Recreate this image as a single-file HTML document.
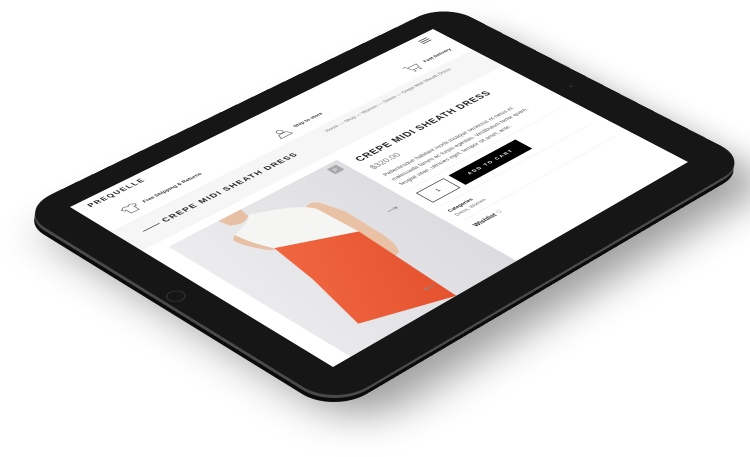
<!DOCTYPE html>
<html><head><meta charset="utf-8"><style>
html,body{margin:0;padding:0;background:#fff;width:750px;height:450px;overflow:hidden;font-family:"Liberation Sans",sans-serif}
.m{position:absolute;left:0;top:0;transform-origin:0 0;transform:matrix3d(0.402202,-0.170633,0,0.00011019,0.317078,0.180374,0,-0.00007618,0,0,1,0,70,207,0,1)}
.wrap{position:absolute;left:0;top:0;width:750px;height:450px}
.body{position:absolute;left:-82px;top:-62px;width:1205px;height:922px;border-radius:85px}
.scr{position:absolute;left:0;top:0;width:1024px;height:768px;background:#fff;overflow:hidden}
.a{position:absolute;white-space:nowrap}
.t{font-weight:bold;letter-spacing:3px;color:#222}
.line{position:absolute;height:1px;background:#e4e4e4}
</style></head><body>
<div class="wrap" style="transform:translate(-1px,7px)"><div class="m"><div class="body" style="background:#0b0b0b;box-shadow:0 70px 110px rgba(0,0,0,.38)"></div></div></div>
<div class="wrap" style="transform:translate(-0.5px,3px)"><div class="m"><div class="body" style="background:#4a4a4a"></div></div></div>
<div class="wrap"><div class="m">
<div class="body" style="background:#161616"></div>
<div style="position:absolute;left:-74px;top:365px;width:32px;height:32px;border-radius:50%;border:3px solid #2e2e2e"></div>
<div style="position:absolute;left:1065px;top:380px;width:8px;height:8px;border-radius:50%;background:#2a2a2a"></div>
<div class="scr">
 <div class="a t" style="left:28px;top:14px;font-size:19px">PREQUELLE</div>
 <svg class="a" style="left:960px;top:14px" width="30" height="20"><path d="M2 3h26M2 10h26M2 17h26" stroke="#333" stroke-width="2.5"/></svg>
 <svg class="a" style="left:62px;top:72px" width="40" height="34"><path d="M10 4l-8 6 4 6 4-2v16h20V14l4 2 4-6-8-6h-6c0 4-8 4-8 0z" fill="none" stroke="#666" stroke-width="2"/></svg>
 <div class="a" style="left:115px;top:80px;font-size:13px;font-weight:bold;color:#333">Free Shipping &amp; Returns</div>
 <svg class="a" style="left:470px;top:72px" width="40" height="34"><circle cx="20" cy="10" r="7" fill="none" stroke="#666" stroke-width="2"/><path d="M4 32l6-14h20l6 14z" fill="none" stroke="#666" stroke-width="2"/></svg>
 <div class="a" style="left:525px;top:80px;font-size:13px;font-weight:bold;color:#333">Ship to store</div>
 <svg class="a" style="left:855px;top:72px" width="40" height="34"><path d="M2 4h6l4 20h20l4-14H10" fill="none" stroke="#666" stroke-width="2"/><circle cx="14" cy="30" r="2.5" fill="#666"/><circle cx="30" cy="30" r="2.5" fill="#666"/></svg>
 <div class="a" style="left:910px;top:80px;font-size:13px;font-weight:bold;color:#333">Fast Delivery</div>
 <div style="position:absolute;left:0;top:125px;width:1024px;height:95px;background:#f6f6f6"></div>
 <div style="position:absolute;left:46px;top:168px;width:42px;height:2px;background:#333"></div>
 <div class="a t" style="left:98px;top:157px;font-size:21px">CREPE MIDI SHEATH DRESS</div>
 <div class="a" style="left:560px;top:140px;font-size:13px;color:#777">Home — Shop — Women — Dress — Crepe Midi Sheath Dress</div>
 <div style="position:absolute;left:46px;top:245px;width:455px;height:523px;background:linear-gradient(100deg,#ececee,#e2e2e5 60%,#dcdce0)"></div>
 <svg class="a" style="left:46px;top:245px" width="455" height="523">
  <defs><linearGradient id="o" x1="0" y1="0" x2="1" y2="1"><stop offset="0" stop-color="#f26a45"/><stop offset="1" stop-color="#e4502c"/></linearGradient></defs>
  <path d="M130 0h60l-5 28q-25 20-50 0z" fill="#e7bfa5"/>
  <path d="M290 85q20 -10 30 10l15 60-5 120q-5 40-20 60l-20 5-5-20 10-40 5-110z" fill="#e9c2a6"/>
  <path d="M120 60l-15 12q0 35 30 80l8 3z" fill="#e7bfa5"/>
  <path d="M144 150l160 75 -10 150 -10 148 -200 -68 40 -170z" fill="url(#o)"/>
  <path d="M120 60q45 -10 70 -35l60 30q40 25 50 50l4 120-160-75q-20-40-24-90z" fill="#f5f5f3"/>
  <rect x="415" y="12" width="26" height="26" fill="#a9a9ab"/>
  <text x="422" y="31" font-size="15" fill="#fff" font-family="Liberation Sans">P</text>
  <path d="M395 215h25m-6-5l6 5-6 5" stroke="#888" stroke-width="2" fill="none"/>
  <path d="M280 465h-25m6-5l-6 5 6 5" stroke="#888" stroke-width="2" fill="none"/>
 </svg>
 <div class="a t" style="left:530px;top:262px;font-size:25px;letter-spacing:2px">CREPE MIDI SHEATH DRESS</div>
 <div class="a" style="left:530px;top:305px;font-size:22px;color:#777">$320.00</div>
 <div class="a" style="left:530px;top:345px;font-size:15px;line-height:24px;color:#555;white-space:normal;width:440px">Pellentesque habitant morbi tristique senectus et netus et malesuada fames ac turpis egestas. Vestibulum tortor quam, feugiat vitae, ultricies eget, tempor sit amet, ante.</div>
 <div class="line" style="left:530px;top:430px;width:460px"></div>
 <div style="position:absolute;left:530px;top:450px;width:80px;height:50px;border:2px solid #333;box-sizing:border-box;font-size:15px;text-align:center;line-height:46px">1</div>
 <div style="position:absolute;left:625px;top:450px;width:200px;height:50px;background:#000;color:#fff;font-size:13px;letter-spacing:4px;text-align:center;line-height:50px;font-weight:bold">ADD TO CART</div>
 <div class="line" style="left:530px;top:520px;width:460px"></div>
 <div class="a" style="left:530px;top:538px;font-size:13px;font-weight:bold;color:#222">Categories</div>
 <div class="a" style="left:530px;top:558px;font-size:13px;color:#666">Dress, Women</div>
 <div class="line" style="left:530px;top:590px;width:460px"></div>
 <div class="a" style="left:530px;top:610px;font-size:16px;font-weight:bold;color:#222">Wishlist <span style="font-weight:normal">♡</span></div>
</div>
</div></div>
</body></html>
